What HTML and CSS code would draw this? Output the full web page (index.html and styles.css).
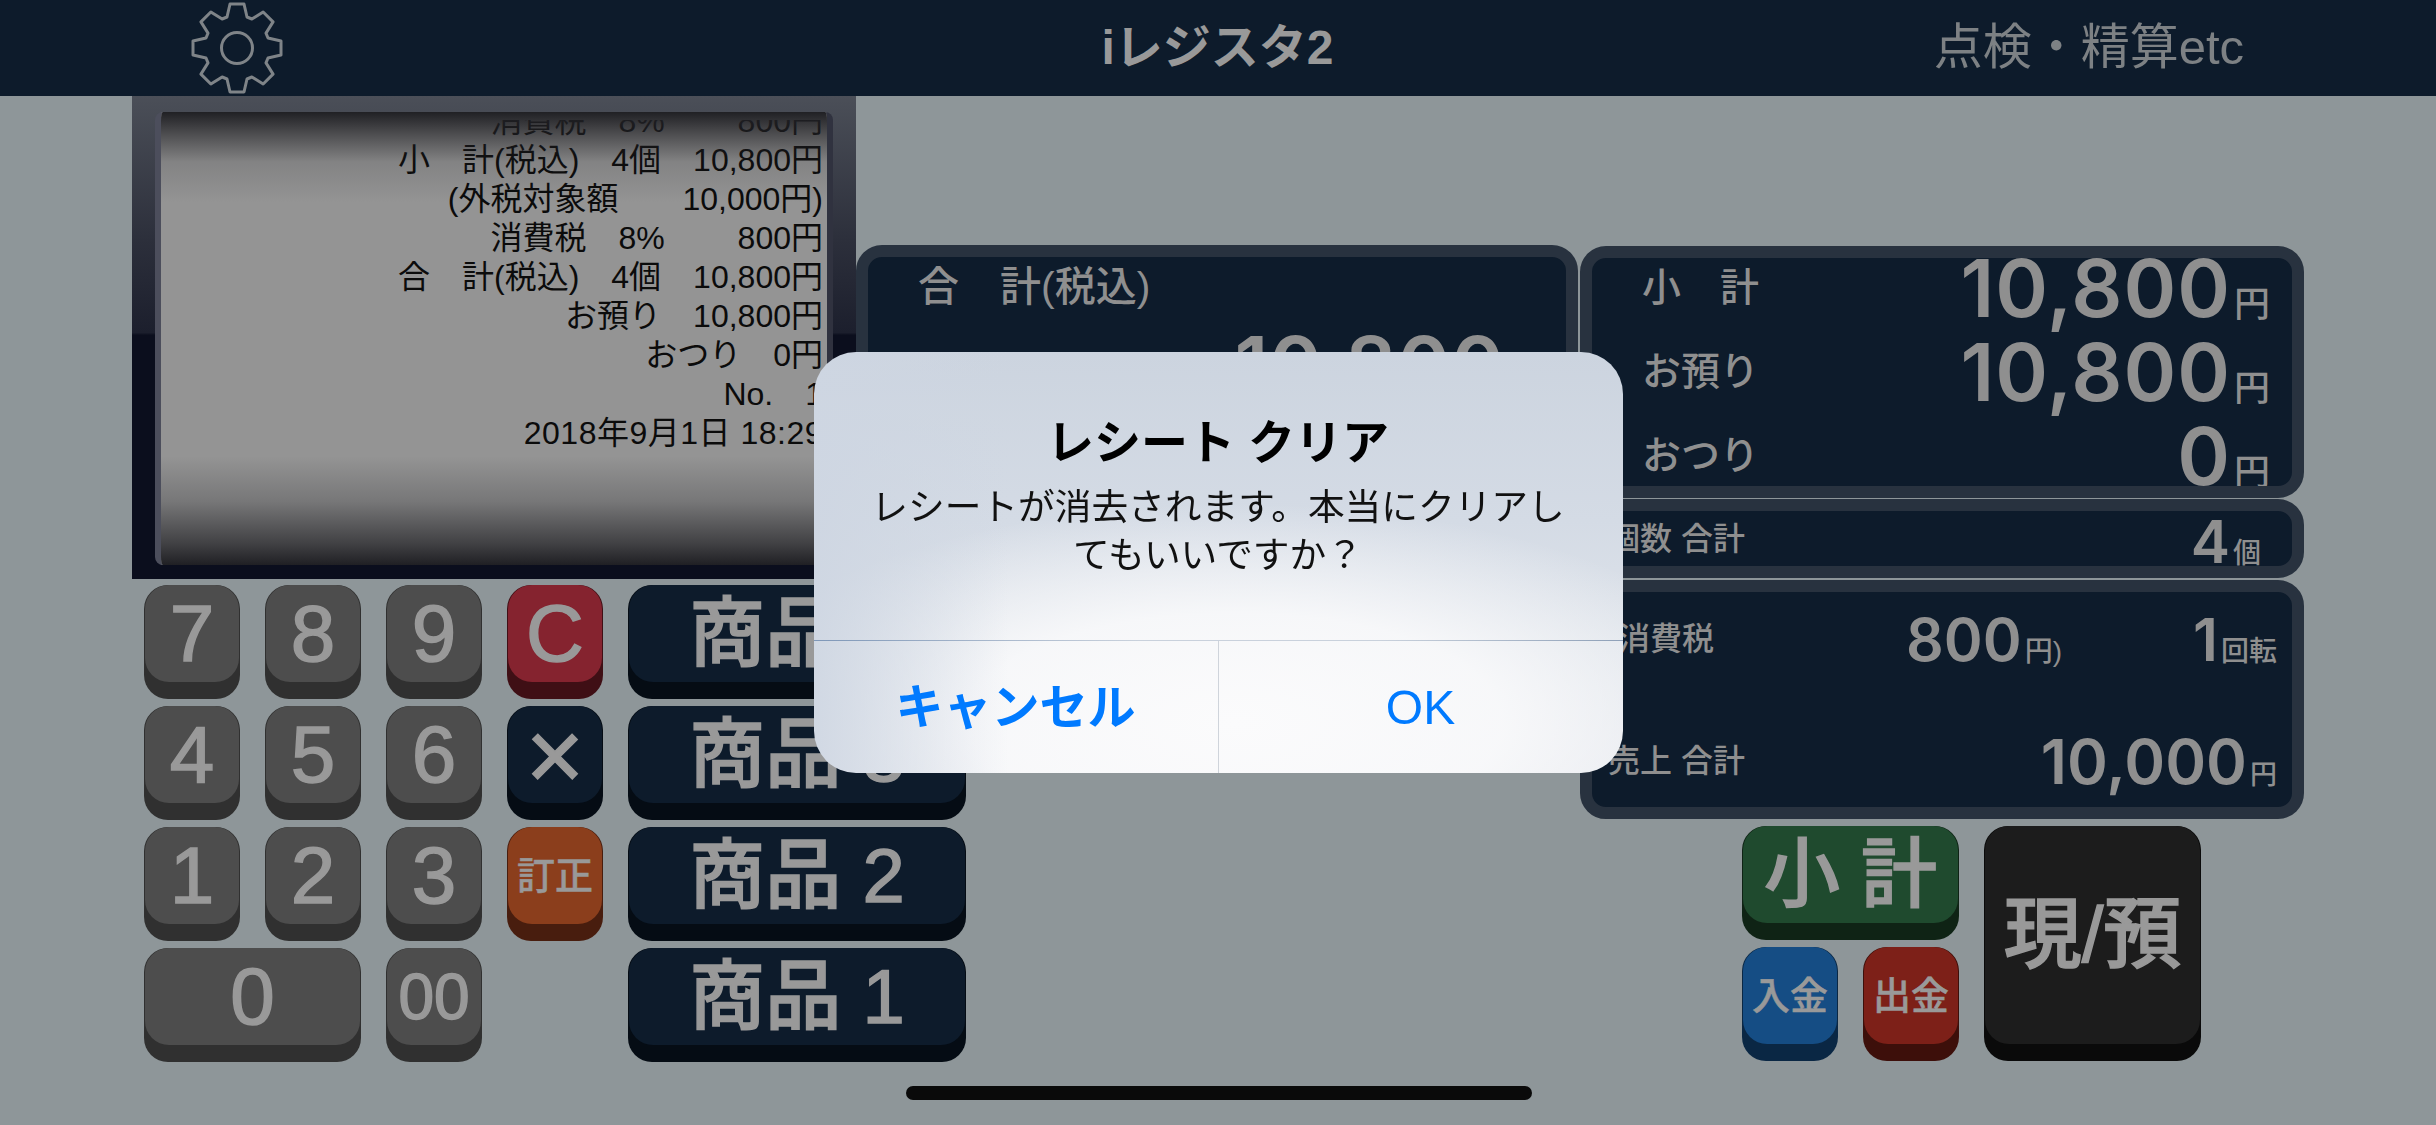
FILE: index.html
```html
<!DOCTYPE html>
<html lang="ja">
<head>
    <meta charset="UTF-8">
    <meta name="viewport" content="width=device-width, initial-scale=1.0">
    <title>iレジスタ2</title>
    <link rel="stylesheet" href="styles.css">
</head>
<body>
    <header class="topbar">
        <svg class="gear" viewBox="-46 -46 92 92" aria-label="設定">
            <polygon points="-10,-31 -7,-44 7,-44 10,-31 14.85,-29 26.16,-36.06 36.06,-26.16 29,-14.85 31,-10 44,-7 44,7 31,10 29,14.85 36.06,26.16 26.16,36.06 14.85,29 10,31 7,44 -7,44 -10,31 -14.85,29 -26.16,36.06 -36.06,26.16 -29,14.85 -31,10 -44,7 -44,-7 -31,-10 -29,-14.85 -36.06,-26.16 -26.16,-36.06 -14.85,-29"/>
            <circle cx="0" cy="0" r="15.5"/>
        </svg>
        <div class="app-title">iレジスタ2</div>
        <div class="top-link">点検・精算etc</div>
    </header>

    <main class="register">
        <section class="receipt">
            <div class="paper">
                <div class="paper-lines">
                    <div>消費税　8%　　 800円</div>
                    <div>小　計(税込)　4個　10,800円</div>
                    <div>(外税対象額　　10,000円)</div>
                    <div>消費税　8%　　 800円</div>
                    <div>合　計(税込)　4個　10,800円</div>
                    <div>お預り　10,800円</div>
                    <div>おつり　0円</div>
                    <div>No.　1</div>
                    <div class="receipt-date">2018年9月1日 18:29</div>
                </div>
            </div>
        </section>

        <section class="panel total-panel">
            <div class="label">合　計(税込)</div>
            <div class="amount big">10,800<small>円</small></div>
        </section>

        <section class="side">
            <div class="panel summary-panel">
                <div class="summary-row">
                    <span class="label">小　計</span>
                    <span class="amount">10,800<small>円</small></span>
                </div>
                <div class="summary-row">
                    <span class="label">お預り</span>
                    <span class="amount">10,800<small>円</small></span>
                </div>
                <div class="summary-row">
                    <span class="label">おつり</span>
                    <span class="amount">0<small>円</small></span>
                </div>
            </div>
            <div class="panel count-panel">
                <span class="label">個数 合計</span>
                <span class="amount mid">4<small>個</small></span>
            </div>
            <div class="panel sales-panel">
                <div class="sales-row">
                    <span class="label tax-label">消費税</span>
                    <span class="amount mid">800<small>円)</small></span>
                    <span class="amount mid turn">1<small>回転</small></span>
                </div>
                <div class="sales-row">
                    <span class="label">売上 合計</span>
                    <span class="amount mid wide">10,000<small>円</small></span>
                </div>
            </div>
            <div class="keys pay-keys">
                <button class="key green span-2"><span class="face word">小 計</span></button>
                <button class="key black cash"><span class="face word">現/預</span></button>
                <button class="key blue"><span class="face small-word">入金</span></button>
                <button class="key red-dark"><span class="face small-word">出金</span></button>
            </div>
        </section>

        <section class="keys numpad">
            <button class="key gray"><span class="face">7</span></button>
            <button class="key gray"><span class="face">8</span></button>
            <button class="key gray"><span class="face">9</span></button>
            <button class="key red"><span class="face">C</span></button>
            <button class="key navy"><span class="face word">商品 4</span></button>

            <button class="key gray"><span class="face">4</span></button>
            <button class="key gray"><span class="face">5</span></button>
            <button class="key gray"><span class="face">6</span></button>
            <button class="key navy"><span class="face times">×</span></button>
            <button class="key navy"><span class="face word">商品 3</span></button>

            <button class="key gray"><span class="face">1</span></button>
            <button class="key gray"><span class="face">2</span></button>
            <button class="key gray"><span class="face">3</span></button>
            <button class="key orange"><span class="face small-word">訂正</span></button>
            <button class="key navy"><span class="face word">商品 2</span></button>

            <button class="key gray span-2"><span class="face">0</span></button>
            <button class="key gray"><span class="face double-zero">00</span></button>
            <button class="key navy product-last"><span class="face word">商品 1</span></button>
        </section>
    </main>

    <div class="dialog-wrap">
        <div class="dialog">
            <div class="dialog-body">
                <h2>レシート クリア</h2>
                <p>レシートが消去されます。本当にクリアしてもいいですか？</p>
            </div>
            <div class="dialog-actions">
                <button class="cancel">キャンセル</button>
                <button>OK</button>
            </div>
        </div>
    </div>

    <div class="home-indicator"></div>
</body>
</html>
```

FILE: styles.css
```css
* {
    box-sizing: border-box;
}

html, body {
    height: 100%;
}

body {
    margin: 0;
    overflow: hidden;
    background-color: #8e9699;
    color: #939393;
    font-family: "Liberation Sans", "Noto Sans CJK JP", sans-serif;
}

/* header */
.topbar {
    display: grid;
    grid-template-columns: 1fr auto 1fr;
    align-items: center;
    height: 96px;
    padding: 0 192px 0 191px;
    background-color: #0d1b2b;
}

.gear {
    width: 92px;
    height: 92px;
    fill: none;
    stroke: #7f8488;
    stroke-width: 3;
    stroke-linejoin: round;
}

.app-title {
    margin-bottom: 10px;
    font-size: 48px;
    font-weight: 700;
    color: #999;
}

.top-link {
    justify-self: end;
    margin-bottom: 12px;
    font-size: 49px;
    color: #7d8184;
}

/* layout */
.register {
    display: grid;
    grid-template-columns: 724px 724px 724px;
    grid-template-rows: 489px auto;
    padding-left: 132px;
}

/* receipt */
.receipt {
    height: 483px;
    padding: 16px 23px 14px;
    background: linear-gradient(#4b4f58 0, #2c2f3b 30%, #1c1f2d 49%, #0b0e1d 49.5%, #0b0e1d 100%);
}

.paper {
    position: relative;
    height: 100%;
    padding: 8px 10px 0 0;
    border-left: 6px solid #4c4e5c;
    border-right: 6px solid #30323f;
    border-radius: 8px;
    background-color: #949494;
    overflow: hidden;
}

.paper::after {
    content: "";
    position: absolute;
    inset: 0;
    background: linear-gradient(rgba(32, 32, 36, 1) 0, rgba(32, 32, 36, 0.6) 5%, rgba(32, 32, 36, 0.15) 11%, rgba(32, 32, 36, 0) 20%, rgba(32, 32, 36, 0) 76%, rgba(32, 32, 36, 0.25) 86%, rgba(32, 32, 36, 0.7) 95%, rgba(32, 32, 36, 1) 100%);
}

.paper-lines {
    display: flex;
    flex-direction: column;
    justify-content: flex-end;
    height: 333px;
    overflow: hidden;
    margin-right: -6px;
    color: #0b0b0b;
    font-size: 32px;
    line-height: 39px;
    text-align: right;
    white-space: pre;
}

.paper-lines div {
    flex: none;
}

.paper-lines .receipt-date {
    letter-spacing: 0.5px;
}

/* panels */
.panel {
    border: 12px solid #28323f;
    border-radius: 26px;
    background-color: #0d1b2b;
    overflow: hidden;
}

.label {
    font-size: 39px;
    font-weight: 500;
    line-height: 60px;
    color: #8f8f8f;
}

.amount {
    font-family: Inter, "Noto Sans CJK JP", sans-serif;
    font-size: 80px;
    font-weight: 600;
    letter-spacing: 1px;
    line-height: 60px;
    color: #8f8f8f;
}

.amount small {
    margin-left: 3px;
    font-family: "Liberation Sans", "Noto Sans CJK JP", sans-serif;
    font-size: 36px;
    font-weight: 500;
    letter-spacing: 0;
}

.total-panel {
    width: 722px;
    height: 333px;
    margin-top: 149px;
    padding-left: 50px;
}

.total-panel .label {
    font-size: 41px;
}

.amount.big {
    padding-right: 22px;
    line-height: 96px;
    text-align: right;
}

.side {
    grid-column: 3;
    grid-row: 1 / 3;
    padding-top: 150px;
}

.summary-panel {
    height: 252px;
    padding: 0 22px 0 50px;
}

.summary-row {
    display: flex;
    justify-content: space-between;
    align-items: flex-start;
    height: 84px;
}

.count-panel {
    display: flex;
    justify-content: space-between;
    align-items: flex-start;
    height: 79px;
    margin-top: 1px;
    padding: 0 31px 0 16px;
}

.count-panel .label,
.sales-panel .label {
    font-size: 32px;
}

.count-panel .label {
    line-height: 56px;
}

.amount.mid {
    font-size: 59px;
    letter-spacing: 0;
    line-height: 61px;
}

.amount.mid small {
    font-size: 28px;
}

.sales-panel {
    display: flex;
    flex-direction: column;
    gap: 28px;
    height: 239px;
    margin-top: 2px;
    padding: 5px 15px 0 16px;
}

.sales-row {
    display: grid;
    grid-template-columns: 1fr auto auto;
    align-items: start;
    height: 92px;
}

.tax-label {
    padding-left: 10px;
}

.amount.mid.turn {
    width: 215px;
    text-align: right;
}

.sales-row .label {
    line-height: 88px;
}

.sales-row .label.tax-label {
    line-height: 84px;
}

.sales-row .amount {
    line-height: 86px;
}

.sales-row .amount.wide {
    font-size: 62px;
    line-height: 90px;
}

.amount.wide small {
    font-size: 27px;
}

/* keys */
.keys {
    display: grid;
    grid-template-columns: repeat(4, 96px);
    grid-auto-rows: 114px;
    gap: 7px 25px;
}

.numpad {
    grid-column: 1 / 3;
    grid-row: 2;
    grid-template-columns: repeat(4, 96px) 338px;
    margin-left: 12px;
}

.pay-keys {
    margin: 7px 0 0 162px;
}

.key {
    display: flex;
    padding: 0 1px 17px;
    border: none;
    border-radius: 24px;
    color: #999;
    font-family: inherit;
    font-size: 80px;
    line-height: 1;
}

.face {
    display: flex;
    flex: 1;
    justify-content: center;
    align-items: center;
    border-radius: 24px;
    -webkit-text-stroke: 1.5px #999;
}

.face.word {
    font-size: 76px;
    font-weight: 500;
    -webkit-text-stroke: 1.5px #999;
    white-space: pre;
}

.face.small-word {
    font-size: 38px;
    font-weight: 500;
    -webkit-text-stroke: 0.5px #999;
}

.face.times {
    font-size: 100px;
}

.face.double-zero {
    font-size: 64px;
}

.span-2 {
    grid-column: span 2;
}

.product-last {
    grid-column: 5;
}

.cash {
    grid-column: 3 / 5;
    grid-row: 1 / 3;
}

.cash .face {
    font-size: 78px;
}

.gray { background-color: #303030; }
.gray .face { background-color: #4d4d4d; }
.red { background-color: #3f0f15; }
.red .face { background-color: #85232f; }
.navy { background-color: #050c14; }
.navy .face { background-color: #0d1b2b; }
.orange { background-color: #481d0e; }
.orange .face { background-color: #8b3e1c; }
.green { background-color: #0f2315; }
.green .face { background-color: #1f4a2e; }
.blue { background-color: #0a2744; }
.blue .face { background-color: #154d84; }
.red-dark { background-color: #3d0f0a; }
.red-dark .face { background-color: #7d2018; }
.black { background-color: #0a0a0a; }
.black .face { background-color: #1c1c1c; }

/* alert */
.dialog-wrap {
    position: fixed;
    inset: 0;
    display: flex;
    justify-content: center;
    align-items: center;
}

.dialog {
    display: flex;
    flex-direction: column;
    width: 809px;
    height: 421px;
    border-radius: 42px;
    background:
        linear-gradient(90deg, rgba(206, 214, 226, 0.9) 0, rgba(206, 214, 226, 0) 24%),
        radial-gradient(ellipse 66% 52% at 52% 88%, #fbfbfc 0%, rgba(251, 251, 252, 0.85) 50%, rgba(251, 251, 252, 0) 100%),
        linear-gradient(#ccd4df 0, #d4dbe5 40%, #dee3ea 70%, #e4e7ed 100%);
    color: #000;
    overflow: hidden;
}

.dialog-body {
    flex: 1;
    padding: 62px 48px 0;
    text-align: center;
}

.dialog-body h2 {
    margin: 0 0 12px;
    font-size: 47px;
    font-weight: 700;
    line-height: 58px;
}

.dialog-body p {
    margin: 0;
    color: #111;
    font-size: 36.7px;
    line-height: 48px;
}

.dialog-actions {
    display: grid;
    grid-template-columns: 405px 1fr;
    height: 133px;
    border-top: 1px solid;
    border-image: linear-gradient(90deg, #7e97b8, #c9d1dc 40%, #c9d1dc 70%, #8ea0b8) 1;
}

.dialog-actions button {
    padding: 2px 0 0;
    border: none;
    background: none;
    color: #007aff;
    font-family: inherit;
    font-size: 48px;
    line-height: 1;
}

.dialog-actions .cancel {
    border-right: 1px solid #cfd4db;
    font-weight: 700;
}

.home-indicator {
    position: fixed;
    left: 906px;
    bottom: 25px;
    width: 626px;
    height: 14px;
    border-radius: 7px;
    background-color: #0a0a0a;
}
```
